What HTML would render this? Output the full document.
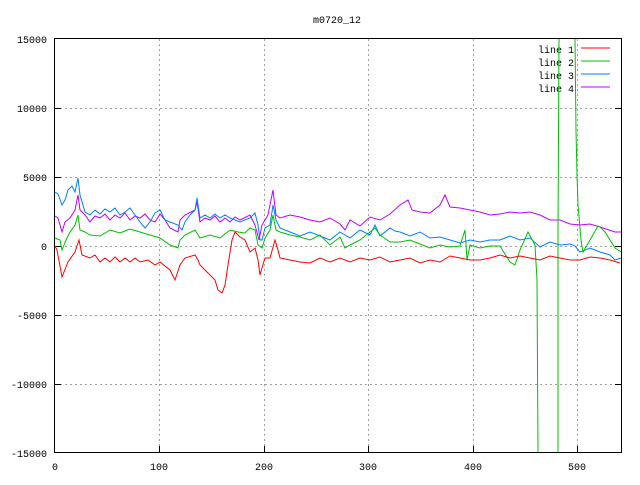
<!DOCTYPE html>
<html><head><style>
body{margin:0;background:#fff;}
svg text{font-family:"Liberation Mono",monospace;font-size:10px;fill:#000;}
</style></head><body>
<svg width="640" height="480" xmlns="http://www.w3.org/2000/svg">
<rect width="640" height="480" fill="#fff"/>
<g stroke="#a0a0a0" stroke-dasharray="2,3" stroke-width="1">
<line x1="159.5" y1="39" x2="159.5" y2="452"/>
<line x1="264.5" y1="39" x2="264.5" y2="452"/>
<line x1="368.5" y1="39" x2="368.5" y2="452"/>
<line x1="473.5" y1="39" x2="473.5" y2="452"/>
<line x1="577.5" y1="39" x2="577.5" y2="452"/>
<line x1="55" y1="108.5" x2="621" y2="108.5"/>
<line x1="55" y1="177.5" x2="621" y2="177.5"/>
<line x1="55" y1="246.5" x2="621" y2="246.5"/>
<line x1="55" y1="315.5" x2="621" y2="315.5"/>
<line x1="55" y1="384.5" x2="621" y2="384.5"/>
</g>
<g stroke="#000" stroke-width="1">
<line x1="55" y1="108.5" x2="61" y2="108.5"/><line x1="615" y1="108.5" x2="621" y2="108.5"/>
<line x1="55" y1="177.5" x2="61" y2="177.5"/><line x1="615" y1="177.5" x2="621" y2="177.5"/>
<line x1="55" y1="246.5" x2="61" y2="246.5"/><line x1="615" y1="246.5" x2="621" y2="246.5"/>
<line x1="55" y1="315.5" x2="61" y2="315.5"/><line x1="615" y1="315.5" x2="621" y2="315.5"/>
<line x1="55" y1="384.5" x2="61" y2="384.5"/><line x1="615" y1="384.5" x2="621" y2="384.5"/>
<line x1="159.5" y1="452" x2="159.5" y2="446"/><line x1="264.5" y1="452" x2="264.5" y2="446"/>
<line x1="368.5" y1="452" x2="368.5" y2="446"/><line x1="473.5" y1="452" x2="473.5" y2="446"/>
<line x1="577.5" y1="452" x2="577.5" y2="446"/>
</g>
<rect x="54.5" y="38.5" width="567" height="414" fill="none" stroke="#000"/>
<g text-anchor="end">
<text x="47" y="43">15000</text><text x="47" y="112">10000</text><text x="47" y="181">5000</text>
<text x="47" y="250">0</text><text x="47" y="319">-5000</text><text x="47" y="388">-10000</text><text x="47" y="457">-15000</text>
</g>
<g text-anchor="middle">
<text x="55" y="470">0</text><text x="159" y="470">100</text><text x="264" y="470">200</text>
<text x="368" y="470">300</text><text x="473" y="470">400</text><text x="577" y="470">500</text>
<text x="337" y="23">m0720_12</text>
</g>
<g text-anchor="end">
<text x="574" y="53">line 1</text><text x="574" y="66">line 2</text><text x="574" y="79">line 3</text><text x="574" y="92">line 4</text>
</g>
<line x1="581" y1="48" x2="610" y2="48" stroke="#f00"/>
<line x1="581" y1="61" x2="610" y2="61" stroke="#00c000"/>
<line x1="581" y1="74" x2="610" y2="74" stroke="#0080ff"/>
<line x1="581" y1="87" x2="610" y2="87" stroke="#c000ff"/>
<g fill="none" stroke-width="1">
<polyline stroke="#c000ff" points="55,216 58,218 62,232 65,222 70,218 75,210 78,195 80,210 85,215 90,222 95,216 100,218 105,214 110,220 115,215 120,218 125,213 130,220 135,216 140,218 145,214 150,220 155,222 160,214 165,220 170,228 178,232 180,220 185,215 195,210 197,202 200,222 205,218 210,220 215,216 220,222 225,218 230,222 235,217 240,220 250,215 255,225 259,240 262,225 268,215 273,190 276,215 280,218 290,215 300,217 310,220 320,222 330,218 340,224 345,230 350,220 360,226 370,217 380,220 390,214 400,205 408,200 412,210 420,212 430,213 440,205 445,195 450,207 460,208 470,210 480,212 490,215 500,214 510,212 520,213 530,212 540,215 550,220 560,220 570,224 580,225 590,224 600,227 615,232 621,232"/>
<polyline stroke="#0080ff" points="55,192 58,194 62,205 65,200 68,190 72,186 75,192 78,178 80,195 85,212 90,215 95,210 100,214 105,209 110,212 115,208 120,215 125,212 130,208 135,215 140,222 145,228 150,222 155,213 160,210 165,220 170,222 178,225 182,230 185,222 190,215 195,210 197,198 200,218 205,215 210,218 215,214 220,218 225,215 230,218 235,220 240,222 250,218 255,213 258,225 260,240 262,240 265,228 270,225 273,205 276,220 280,228 290,232 300,236 310,232 320,236 330,240 340,232 350,238 360,230 370,235 375,225 380,236 390,228 395,231 400,232 410,236 420,232 430,238 440,237 450,240 460,243 470,240 480,242 490,240 500,240 510,236 520,240 530,238 540,247 550,242 560,245 570,244 575,246 580,252 590,248 600,252 610,255 615,260 621,258"/>
<polyline stroke="#00c000" points="55,238 60,240 62,250 66,240 70,232 75,225 78,215 80,230 85,232 90,235 100,236 110,230 120,233 130,229 140,232 150,235 160,238 170,245 178,248 180,240 185,235 195,230 200,238 210,235 220,238 230,230 238,232 245,233 250,228 255,230 258,245 262,248 265,238 270,230 273,215 276,230 280,232 290,235 300,237 310,240 320,235 330,245 340,237 345,248 350,245 360,240 370,232 375,228 380,235 390,242 400,242 410,240 420,244 430,248 440,245 450,247 460,246 465,230 467,260 470,245 480,248 490,246 500,246 510,262 515,265 520,250 528,232 535,245 537,280 538,452"/>
<polyline stroke="#00c000" points="558,452 558,230 559,39"/>
<polyline stroke="#00c000" points="575,39 576,130 577,175 578,205 581,240 583,252 590,240 598,226 600,227 605,232 615,248 621,252"/>
<polyline stroke="#f00" points="55,246 57,250 62,277 68,262 75,252 79,240 82,255 90,258 95,255 100,262 105,258 110,262 115,257 120,262 125,258 130,262 135,258 140,262 148,260 155,265 160,262 170,270 175,280 180,265 185,258 195,255 198,260 200,265 205,270 215,280 218,290 222,293 225,285 228,265 232,240 235,232 240,237 245,240 250,252 255,248 258,260 260,275 262,268 265,258 270,258 275,240 278,250 280,258 290,260 300,262 310,263 320,258 330,262 340,258 350,262 360,258 370,260 380,257 390,262 400,260 410,258 420,263 430,260 440,262 450,256 460,258 470,260 480,260 490,258 500,255 510,258 520,256 530,258 540,260 550,256 560,258 570,260 580,260 590,257 600,258 610,260 620,263"/>
</g>
</svg>
</body></html>
